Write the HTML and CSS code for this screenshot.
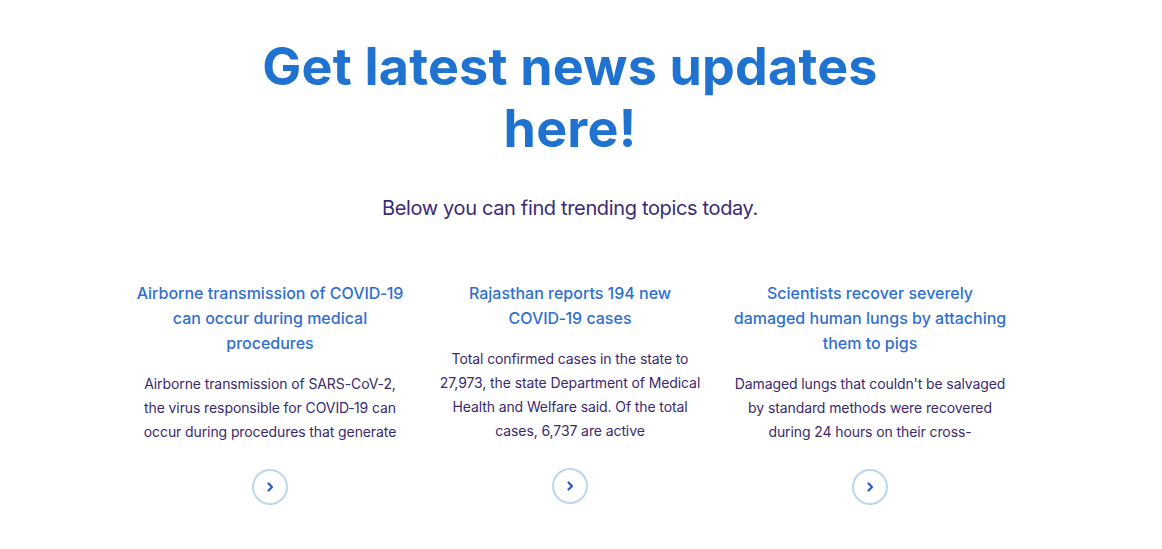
FILE: index.html
```html
<!DOCTYPE html>
<html lang="en">
<head>
<meta charset="utf-8">
<title>News updates</title>
<link rel="stylesheet" href="styles.css">
</head>
<body>
<main class="page">
  <header class="intro">
    <h1 class="intro-title">Get latest news updates here!</h1>
    <p class="intro-sub">Below you can find trending topics today.</p>
  </header>
  <section class="cards">
    <article class="card">
      <h2 class="card-title">Airborne transmission of COVID&#8209;19 can occur during medical procedures</h2>
      <p class="card-text">Airborne transmission of SARS-CoV-2, the virus responsible for COVID&#8209;19 can occur during procedures that generate</p>
      <a class="card-btn" href="#" aria-label="Read more"><svg viewBox="0 0 12 12" width="12" height="12"><path d="M4.5 2.5 L8 6 L4.5 9.5" fill="none" stroke="currentColor" stroke-width="2.2" stroke-linecap="round" stroke-linejoin="round"/></svg></a>
    </article>
    <article class="card">
      <h2 class="card-title">Rajasthan reports 194 new COVID&#8209;19 cases</h2>
      <p class="card-text">Total confirmed cases in the state to 27,973, the state Department of Medical Health and Welfare said. Of the total cases, 6,737 are active</p>
      <a class="card-btn" href="#" aria-label="Read more"><svg viewBox="0 0 12 12" width="12" height="12"><path d="M4.5 2.5 L8 6 L4.5 9.5" fill="none" stroke="currentColor" stroke-width="2.2" stroke-linecap="round" stroke-linejoin="round"/></svg></a>
    </article>
    <article class="card">
      <h2 class="card-title">Scientists recover severely damaged human lungs by attaching them to pigs</h2>
      <p class="card-text">Damaged lungs that couldn't be salvaged by standard methods were recovered during 24 hours on their cross-</p>
      <a class="card-btn" href="#" aria-label="Read more"><svg viewBox="0 0 12 12" width="12" height="12"><path d="M4.5 2.5 L8 6 L4.5 9.5" fill="none" stroke="currentColor" stroke-width="2.2" stroke-linecap="round" stroke-linejoin="round"/></svg></a>
    </article>
  </section>
</main>
</body>
</html>
```
FILE: styles.css
```css
* { box-sizing: border-box; }
html, body { margin: 0; padding: 0; background: #ffffff; }
body {
  font-family: Inter, "Noto Sans", "Liberation Sans", sans-serif;
  color: #3b2a78;
}
.page {
  width: 1140px;
  padding-top: 36px;
}
.intro {
  display: flex;
  flex-direction: column;
  align-items: center;
  text-align: center;
}
.intro-title {
  margin: 0;
  max-width: 680px;
  font-size: 52px;
  line-height: 62px;
  font-weight: 700;
  color: #1f72d0;
  letter-spacing: 0.2px;
}
.intro-sub {
  margin: 34px 0 0;
  font-size: 20px;
  line-height: 28px;
  color: #3b2a78;
  letter-spacing: -0.35px;
}
.cards {
  display: grid;
  grid-template-columns: repeat(3, 280px);
  column-gap: 20px;
  justify-content: center;
  margin-top: 59px;
}
.card {
  display: flex;
  flex-direction: column;
  align-items: center;
  text-align: center;
}
.card-title {
  margin: 0;
  font-size: 16px;
  line-height: 25px;
  font-weight: 500;
  color: #2f6fd1;
}
.card-text {
  margin: 16px 0 0;
  padding: 0 3px;
  font-size: 14px;
  line-height: 24px;
  color: #3b2a6e;
  letter-spacing: -0.1px;
}
.card-btn {
  margin-top: 25px;
  width: 36px;
  height: 36px;
  border: 2px solid #bcd5f2;
  border-radius: 50%;
  display: flex;
  align-items: center;
  justify-content: center;
  color: #2a5ac6;
}
```
